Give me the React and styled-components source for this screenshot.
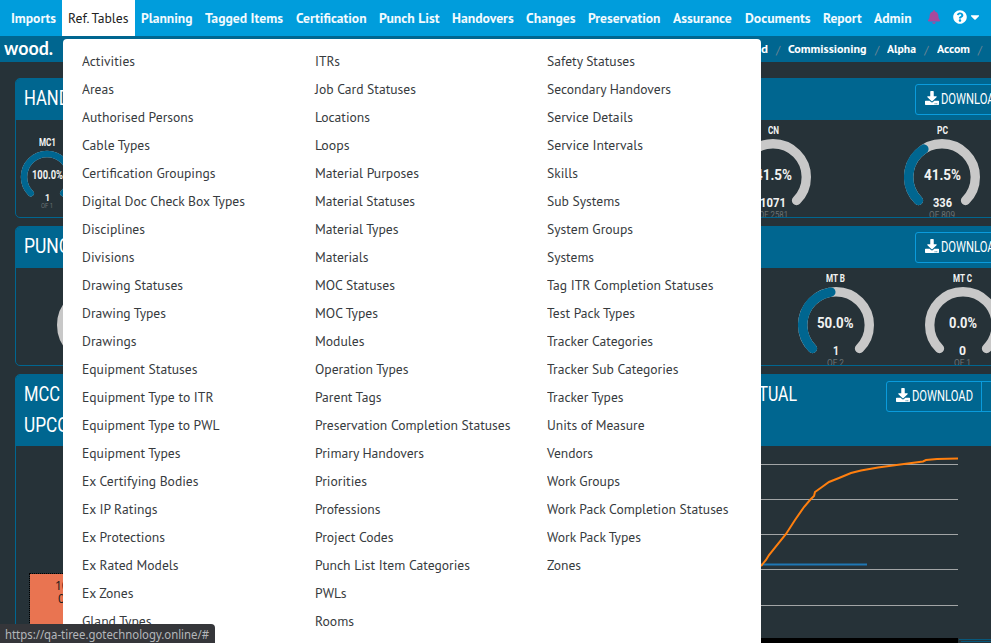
import React, { useLayoutEffect, useRef, useState } from 'react';
import styled, { createGlobalStyle } from 'styled-components';
import { FaDownload, FaBell, FaQuestionCircle, FaCaretDown } from 'react-icons/fa';

const Global = createGlobalStyle`
  *, *::before, *::after { box-sizing: border-box; }
  html, body { margin: 0; overflow: hidden; background: #263238; }
`;

const Box = styled.span`
  display: inline-block;
  flex: none;
  width: ${(p) => p.$w}px;
  white-space: pre;
  text-align: left;
`;
const Squeezed = styled.span`
  display: inline-block;
  transform-origin: 0 50%;
`;

/* Condenses a label horizontally so it fills exactly `w` pixels. */
function Fit({ w, children }) {
  const ref = useRef(null);
  const [scale, setScale] = useState(1);
  useLayoutEffect(() => {
    const el = ref.current;
    el.style.transform = 'none';
    const natural = el.getBoundingClientRect().width;
    el.style.transform = `scaleX(${w / natural})`;
    setScale(w / natural);
  }, [w, children]);
  return (
    <Box $w={w}>
      <Squeezed ref={ref} style={{ transform: `scaleX(${scale})` }}>{children}</Squeezed>
    </Box>
  );
}

const Page = styled.div`
  position: relative;
  width: 991px;
  height: 643px;
  overflow: hidden;
  background: #263238;
  color: #fff;
  font-family: 'PT Sans', 'Noto Sans', sans-serif;
`;
const NavBar = styled.nav`
  display: flex;
  height: 36px;
  padding-left: 4.5px;
  background: #009ddc;
`;
const NavItem = styled.a`
  display: flex;
  align-items: center;
  flex: none;
  padding: 0 6.35px 0 6.23px;
  font-size: 14px;
  line-height: 36px;
  font-weight: ${(p) => (p.$active ? 400 : 600)};
  color: ${(p) => (p.$active ? '#222' : '#f2fafe')};
  background: ${(p) => (p.$active ? '#fff' : 'transparent')};
`;
const NavIcons = styled.div`
  display: flex;
  align-items: center;
  padding: 0 0 2px 9px;
  svg { flex: none; }
`;
const Bell = styled(FaBell)`
  color: #a8499c;
  margin-right: 12px;
`;
const Caret = styled(FaCaretDown)`
  margin-left: 1px;
`;

const SubBar = styled.div`
  display: flex;
  align-items: center;
  height: 26px;
  padding-left: 4px;
  background: #006690;
`;
const Logo = styled.div`
  width: 757px;
  font: 700 19px/22px Lato, sans-serif;
  padding-bottom: 3px;
`;
const Crumb = styled.span`
  display: flex;
  font-size: 12px;
  line-height: 26px;
  font-weight: 600;
`;
const Slash = styled.span`
  width: 20.4px;
  flex: none;
  text-align: center;
  font-size: 12px;
  color: #6c8594;
`;

const Board = styled.main`
  display: flex;
  flex-direction: column;
  gap: 8px;
  width: 1040px;
  padding: 16px 0 0 15px;
`;
const Card = styled.section`
  height: ${(p) => p.$h}px;
  width: ${(p) => (p.$w ? `${p.$w}px` : 'auto')};
  flex: none;
  border: 1px solid #006690;
  border-radius: 5px;
  overflow: hidden;
`;
const CardHead = styled.header`
  display: flex;
  justify-content: space-between;
  height: ${(p) => p.$h}px;
  padding: 4px 0 0 ${(p) => p.$pad}px;
  background: #006690;
`;
const Title = styled.h2`
  margin: 0;
  font: 400 21px/31px Roboto, sans-serif;
`;
const ButtonGroup = styled.div`
  display: flex;
  flex: none;
  width: ${(p) => p.$w}px;
  height: 31px;
  margin-top: ${(p) => p.$top}px;
  border: 1px solid #0a9bdc;
  border-radius: 3px;
`;
const DownloadButton = styled.button`
  display: flex;
  align-items: center;
  width: 95px;
  height: 29px;
  padding: 0 0 0 9px;
  gap: 2px;
  border: 0;
  border-right: 1px solid #0a9bdc;
  background: transparent;
  color: #fff;
  font: 400 14px/29px Roboto, sans-serif;
  svg { flex: none; margin-bottom: 3px; }
`;
const GaugeRow = styled.div`
  display: flex;
  height: 97px;
  padding-left: ${(p) => p.$pad}px;
`;
const GaugeCell = styled.div`
  display: grid;
  grid-template-rows: 19px 50px 14px 12px;
  grid-template-columns: 100%;
  justify-items: center;
  flex: none;
  width: ${(p) => p.$w}px;
  margin-right: ${(p) => p.$gap || 0}px;
  font-family: Roboto, sans-serif;
  color: #f2f2f2;
`;
const GaugeLabel = styled.div`
  font-size: 10px;
  font-weight: 700;
  line-height: 21px;
  padding-top: ${(p) => (p.$small ? 12 : 0)}px;
`;
const Dial = styled.div`
  display: grid;
  place-items: center;
  height: 76px;
  > * { grid-area: 1 / 1; }
`;
const Percent = styled.div`
  font-size: ${(p) => (p.$small ? 12 : 15.5)}px;
  font-weight: 700;
  line-height: 20px;
  padding-bottom: 4px;
`;
const Count = styled.div`
  font-size: ${(p) => (p.$small ? 9 : 12.5)}px;
  font-weight: 700;
  line-height: ${(p) => (p.$small ? 19 : 27)}px;
`;
const Total = styled.div`
  font-size: ${(p) => (p.$small ? 7 : 8.5)}px;
  line-height: ${(p) => (p.$small ? 7 : 25)}px;
  color: #6d7275;
`;

function arc(c, r, from, to) {
  const pt = (a) => {
    const t = ((a - 90) * Math.PI) / 180;
    return `${c + r * Math.cos(t)} ${c + r * Math.sin(t)}`;
  };
  return `M${pt(from)} A${r} ${r} 0 ${to - from > 180 ? 1 : 0} 1 ${pt(to)}`;
}

function Gauge({ cell, gap, label, labelW, pct, pctW, end, count, countW, total, totalW, small }) {
  const r = small ? 23 : 33.3;
  return (
    <GaugeCell $w={cell} $gap={gap}>
      <GaugeLabel $small={small}><Fit w={labelW}>{label}</Fit></GaugeLabel>
      <Dial>
        <svg width="76" height="76" fill="none" strokeLinecap="round" strokeWidth={small ? 6.4 : 9.4}>
          <path d={arc(38, r, -135, 135)} stroke="#c8c8c8" />
          {end !== undefined && <path d={arc(38, r, -135, end)} stroke="#006690" />}
        </svg>
        <Percent $small={small}><Fit w={pctW}>{pct}</Fit></Percent>
      </Dial>
      <Count $small={small}><Fit w={countW}>{count}</Fit></Count>
      <Total $small={small}><Fit w={totalW}>{total}</Fit></Total>
    </GaugeCell>
  );
}

const Columns = styled.div`
  display: flex;
  gap: 9px;
`;
const HeatTile = styled.div`
  width: 150px;
  height: 90px;
  margin: 127px 0 0 13px;
  padding: 5px 0 0 25px;
  border: 1px dotted #000;
  background: #e97451;
  background-clip: padding-box;
  color: #1c1c1c;
  font: 12px/13px 'Noto Sans', sans-serif;
`;
const ChartArea = styled.div`
  display: flex;
  justify-content: flex-end;
  padding-right: 48px;
`;

const Menu = styled.div`
  position: absolute;
  z-index: 2;
  top: 39px;
  left: 63px;
  width: 698px;
  height: 620px;
  padding: 8px 0 0 19px;
  display: grid;
  grid-template-columns: repeat(3, 232.7px);
  border-radius: 4px 4px 0 0;
  background: #fff;
  color: #373b3e;
`;
const MenuColumn = styled.ul`
  margin: 0;
  padding: 0;
  list-style: none;
`;
const MenuItem = styled.li`
  height: 28px;
  font-size: 13.5px;
  line-height: 28px;
`;
const StatusUrl = styled.div`
  position: absolute;
  z-index: 3;
  left: 0;
  bottom: 0;
  width: 215px;
  height: 19px;
  padding-left: 5px;
  border-radius: 0 4px 0 0;
  background: #35363a;
  color: #b4b7ba;
  font: 12px/21px 'Noto Sans', sans-serif;
`;

const nav = [
  ['Imports', 45], ['Ref. Tables', 60.5], ['Planning', 51.5], ['Tagged Items', 78],
  ['Certification', 70.5], ['Punch List', 60.5], ['Handovers', 61.7], ['Changes', 49.5],
  ['Preservation', 72.5], ['Assurance', 58.7], ['Documents', 65.5], ['Report', 38.7], ['Admin', 37.7],
];
const columns = [
  [['Activities', 53], ['Areas', 32], ['Authorised Persons', 111.5], ['Cable Types', 68],
    ['Certification Groupings', 133.5], ['Digital Doc Check Box Types', 163], ['Disciplines', 63],
    ['Divisions', 52.5], ['Drawing Statuses', 101], ['Drawing Types', 84], ['Drawings', 54.5],
    ['Equipment Statuses', 115.5], ['Equipment Type to ITR', 131.5], ['Equipment Type to PWL', 137.5],
    ['Equipment Types', 98.5], ['Ex Certifying Bodies', 116.5], ['Ex IP Ratings', 75.5],
    ['Ex Protections', 83], ['Ex Rated Models', 96.5], ['Ex Zones', 51.5], ['Gland Types', 69.5]],
  [['ITRs', 25], ['Job Card Statuses', 101], ['Locations', 55], ['Loops', 34.5],
    ['Material Purposes', 104], ['Material Statuses', 100], ['Material Types', 83.5], ['Materials', 53.5],
    ['MOC Statuses', 80], ['MOC Types', 63], ['Modules', 49.5], ['Operation Types', 93.5],
    ['Parent Tags', 66.5], ['Preservation Completion Statuses', 195.5], ['Primary Handovers', 109],
    ['Priorities', 52], ['Professions', 65.5], ['Project Codes', 78.5],
    ['Punch List Item Categories', 155], ['PWLs', 31.5], ['Rooms', 39]],
  [['Safety Statuses', 88], ['Secondary Handovers', 124], ['Service Details', 86],
    ['Service Intervals', 96], ['Skills', 31], ['Sub Systems', 73], ['System Groups', 86],
    ['Systems', 47], ['Tag ITR Completion Statuses', 166.5], ['Test Pack Types', 88],
    ['Tracker Categories', 106], ['Tracker Sub Categories', 131.5], ['Tracker Types', 76.5],
    ['Units of Measure', 97.5], ['Vendors', 46], ['Work Groups', 73],
    ['Work Pack Completion Statuses', 181.5], ['Work Pack Types', 94], ['Zones', 34]],
];

function Download({ width = 140, top = 1 }) {
  return (
    <ButtonGroup $w={width} $top={top}>
      <DownloadButton><FaDownload size={14} /><Fit w={61}>DOWNLOAD</Fit></DownloadButton>
    </ButtonGroup>
  );
}

export default function App() {
  return (
    <Page>
      <Global />
      <NavBar>
        {nav.map(([text, w]) => (
          <NavItem key={text} $active={text === 'Ref. Tables'}><Fit w={w}>{text}</Fit></NavItem>
        ))}
        <NavIcons>
          <Bell size={14} />
          <FaQuestionCircle size={14} />
          <Caret size={14} />
        </NavIcons>
      </NavBar>
      <SubBar>
        <Logo><Fit w={49}>wood.</Fit></Logo>
        <Crumb><Fit w={7}>d</Fit></Crumb><Slash>/</Slash>
        <Crumb><Fit w={78.5}>Commissioning</Fit></Crumb><Slash>/</Slash>
        <Crumb><Fit w={29}>Alpha</Fit></Crumb><Slash>/</Slash>
        <Crumb><Fit w={33}>Accom</Fit></Crumb><Slash>/</Slash>
      </SubBar>
      <Board>
        <Card $h={140}>
          <CardHead $h={41} $pad={8}>
            <Title><Fit w={97}>HANDOVERS</Fit></Title>
            <Download width={124} />
          </CardHead>
          <GaugeRow $pad={0}>
            <Gauge cell={62} gap={610.5} small label="MC1" labelW={17} pct="100.0%" pctW={31} end={135} count="1" countW={5} total="OF 1" totalW={12} />
            <Gauge cell={169} label="CN" labelW={11} pct="41.5%" pctW={37} count="1071" countW={26} total="OF 2581" totalW={29} end={-33} />
            <Gauge cell={169} label="PC" labelW={11} pct="41.5%" pctW={37} count="336" countW={19} total="OF 809" totalW={26} end={-33} />
          </GaugeRow>
        </Card>
        <Card $h={140}>
          <CardHead $h={41} $pad={8}>
            <Title><Fit w={98}>PUNCH LIST</Fit></Title>
            <Download width={124} />
          </CardHead>
          <GaugeRow $pad={15}>
            <Gauge cell={127} gap={614} label="MT A" labelW={19} pct="0.0%" pctW={28} count="0" countW={7} total="OF 0" totalW={16} />
            <Gauge cell={127} label="MT B" labelW={19} pct="50.0%" pctW={36.5} count="1" countW={6} total="OF 2" totalW={17} end={-9} />
            <Gauge cell={127} label="MT C" labelW={19} pct="0.0%" pctW={28} count="0" countW={7} total="OF 1" totalW={17} />
          </GaugeRow>
        </Card>
        <Columns>
          <Card $h={290} $w={480}>
            <CardHead $h={71} $pad={8}>
              <Title><Fit w={36}>MCC</Fit><br /><Fit w={89}>UPCOMING</Fit></Title>
            </CardHead>
            <HeatTile>10<br />&nbsp;0</HeatTile>
          </Card>
          <Card $h={290} $w={536}>
            <CardHead $h={71} $pad={233}>
              <Title><Fit w={59}>ACTUAL</Fit></Title>
              <Download width={153} top={2} />
            </CardHead>
            <ChartArea>
              <svg width="230" height="198" fill="none">
                <path d="M0 18.5H197M0 53.5H197M0 88.5H197M0 123.5H197M0 159.5H197" stroke="#a2a5a6" />
                <path d="M0 118.5H106" stroke="#1f77b4" strokeWidth="2" />
                <path d="M0 120 L5 114 L8 109 L25 88 L34 74 L43 61 L49 54 L53 50 L54 46 L61 41 L68 36 L78 32 L90 27 L100 24.5 L117 21.5 L143 18 L162 15.5 L165 14 L176 13 L197 12.5" stroke="#ff7f0e" strokeWidth="2" />
                <path d="M0 192H197V198H0Z" fill="#000" />
                <path d="M198 193.5H230M200 195.5H230" stroke="#07577a" />
              </svg>
            </ChartArea>
          </Card>
        </Columns>
      </Board>
      <Menu>
        {columns.map((items, i) => (
          <MenuColumn key={i}>
            {items.map(([text, w]) => <MenuItem key={text}><Fit w={w}>{text}</Fit></MenuItem>)}
          </MenuColumn>
        ))}
      </Menu>
      <StatusUrl><Fit w={204}>https://qa-tiree.gotechnology.online/#</Fit></StatusUrl>
    </Page>
  );
}
